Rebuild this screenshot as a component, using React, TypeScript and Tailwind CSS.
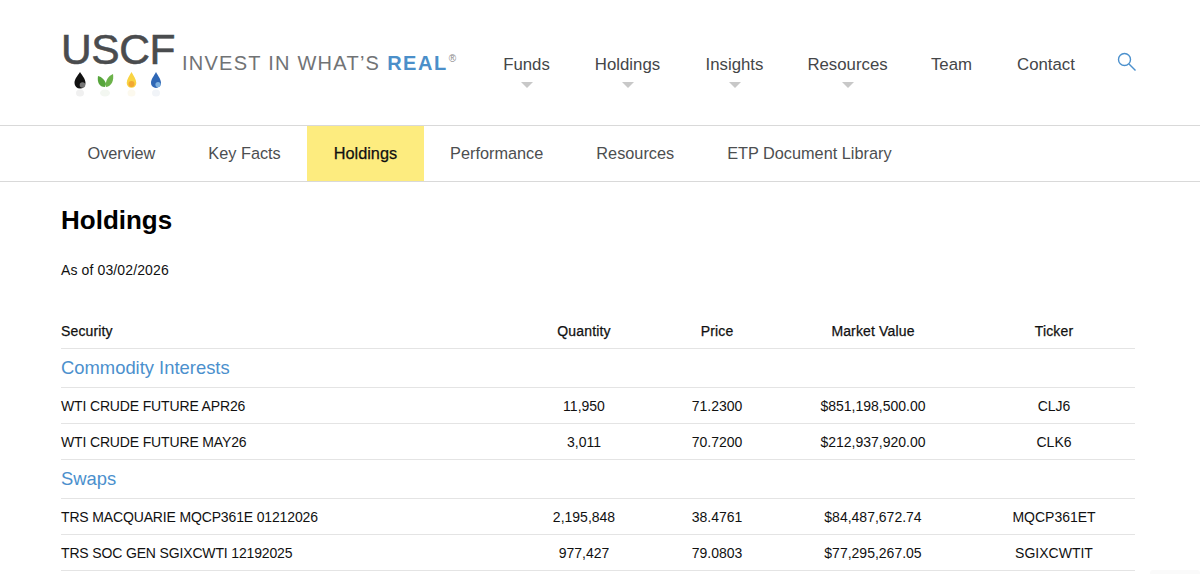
const navItems = [
  { label: "Funds", arrow: true, cls: "w-[45px]" },
  { label: "Holdings", arrow: true, cls: "w-[65px]" },
  { label: "Insights", arrow: true, cls: "w-[57px]" },
  { label: "Resources", arrow: true, cls: "w-[77px]" },
  { label: "Team", arrow: false, cls: "w-[39px]" },
  { label: "Contact", arrow: false, cls: "w-[58px]" },
];

const tabs = ["Overview", "Key Facts", "Holdings", "Performance", "Resources", "ETP Document Library"];

const Logo = () => (
  <div className="flex items-start">
    <div className="w-[115px] shrink-0">
      <div className="h-[39px] text-[42.5px] leading-[39px] tracking-[-0.4px] text-[#4a4c4e] whitespace-nowrap [-webkit-text-stroke:0.6px_#4a4c4e]">USCF</div>
      <svg width="115" height="34" viewBox="0 0 115 34" className="block">
        <path d="M19 3c2.500 4 5.500 7 5.500 11a5.500 5.500 0 0 1-11 0c0-4 3-7 5.500-11z" fill="#111" />
        <circle cx="21.500" cy="16" r="2.800" fill="#777" />
        <path d="M44 18c-6 0-8-5-7-11 4 1 7 4 8 8z" fill="#57a53c" />
        <path d="M45 18c-1-6 2-11 7-13 1 6-1 12-7 13z" fill="#6cb24a" />
        <path d="M70.500 3c2 4 4.800 7 4.800 11a4.800 4.800 0 0 1-9.600 0c0-4 2.800-7 4.800-11z" fill="#f9d443" />
        <circle cx="70.500" cy="15" r="3" fill="#f2a833" />
        <path d="M95 3c2 4 5 7 5 11a5 5 0 0 1-10 0c0-4 3-7 5-11z" fill="#2f67b5" />
        <circle cx="97" cy="15.500" r="2.600" fill="#7fb1df" />
        <ellipse cx="19" cy="24" rx="4" ry="3.500" fill="#f0f0f0" />
        <ellipse cx="44" cy="24" rx="5" ry="3.500" fill="#f3f7f1" />
        <ellipse cx="70.500" cy="24" rx="4" ry="3.500" fill="#fcf9ee" />
        <ellipse cx="95" cy="24" rx="4" ry="3.500" fill="#f1f4f8" />
      </svg>
    </div>
    <div className="ml-[6px] mt-[21px] flex items-start whitespace-nowrap text-[20px] leading-[24px] tracking-[1.25px] text-[#717375]">
      <span>INVEST IN WHAT’S</span>
      <span className="ml-[7px] font-bold tracking-[1.5px] text-[#4b8fc9]">REAL</span>
      <span className="ml-[1px] mt-[-4px] text-[10px] tracking-normal text-[#888]">®</span>
    </div>
  </div>
);

const Row = ({ cells }: { cells: string[] }) => (
  <div className="grid grid-cols-[446px_154px_112px_200px_162px] h-[36px] pt-[1px] items-center border-b border-[#e4e4e4] text-[14px] text-[#111]">
    <div className="tracking-[-0.15px]">{cells[0]}</div>
    <div className="text-center">{cells[1]}</div>
    <div className="text-center">{cells[2]}</div>
    <div className="text-center">{cells[3]}</div>
    <div className="text-center">{cells[4]}</div>
  </div>
);

const Group = ({ title }: { title: string }) => (
  <div className="h-[39px] flex items-center border-b border-[#e4e4e4] text-[18.400px] text-[#4b90cd]">{title}</div>
);

export default function App() {
  return (
    <div className="relative h-[574px] w-[1200px] overflow-hidden bg-white font-['Liberation_Sans',Arial,sans-serif]">
      <header className="h-[126px] border-b border-[#d9d9d9] pl-[61px] pr-[64px] flex items-start">
        <div className="pt-[30px]">
          <Logo />
        </div>
        <nav className="ml-[48px] flex pt-[55px] gap-[46px] text-[16.800px] leading-[20px] text-[#444648]">
          {navItems.map((n) => (
            <div key={n.label} className={`${n.cls} flex flex-col items-center whitespace-nowrap`}>
              <span>{n.label}</span>
              {n.arrow && <span className="mt-[7px] border-x-[6px] border-t-[6px] border-x-transparent border-t-[#c8c8c8]" />}
            </div>
          ))}
        </nav>
        <svg width="20" height="20" viewBox="0 0 20 20" fill="none" stroke="#4b90cd" strokeWidth="1.400" className="ml-auto mt-[52px] -mr-[1px]">
          <circle cx="7.500" cy="7.500" r="6" />
          <path d="M12 12L18.500 18.500" />
        </svg>
      </header>

      <div className="h-[56px] border-b border-[#d9d9d9] pl-[61px] flex text-[16.300px] text-[#4c4e50]">
        {tabs.map((t) => (
          <div
            key={t}
            className={
              t === "Holdings"
                ? "h-[55px] px-[26.500px] flex items-center bg-[#fdec7f] text-[#111] [-webkit-text-stroke:0.25px_#111]"
                : "h-[55px] px-[26.500px] flex items-center whitespace-nowrap"
            }
          >
            {t}
          </div>
        ))}
      </div>

      <main className="px-[61px]">
        <h1 className="mt-[22px] text-[26px] leading-[32px] font-bold text-black">Holdings</h1>
        <p className="mt-[24px] text-[14px] leading-[20px] tracking-[0.12px] text-[#111]">As of 03/02/2026</p>

        <div className="mt-[34px] w-[1074px]">
          <div className="grid grid-cols-[446px_154px_112px_200px_162px] h-[35px] items-center border-b border-[#e4e4e4] text-[14px] tracking-[0.15px] text-[#111] [-webkit-text-stroke:0.25px_#111]">
            <div>Security</div>
            <div className="text-center">Quantity</div>
            <div className="text-center">Price</div>
            <div className="text-center">Market Value</div>
            <div className="text-center">Ticker</div>
          </div>
          <Group title="Commodity Interests" />
          <Row cells={["WTI CRUDE FUTURE APR26", "11,950", "71.2300", "$851,198,500.00", "CLJ6"]} />
          <Row cells={["WTI CRUDE FUTURE MAY26", "3,011", "70.7200", "$212,937,920.00", "CLK6"]} />
          <Group title="Swaps" />
          <Row cells={["TRS MACQUARIE MQCP361E 01212026", "2,195,848", "38.4761", "$84,487,672.74", "MQCP361ET"]} />
          <Row cells={["TRS SOC GEN SGIXCWTI 12192025", "977,427", "79.0803", "$77,295,267.05", "SGIXCWTIT"]} />
        </div>
      </main>

      <div className="absolute bottom-0 right-0 h-[4px] w-[50px] rounded-t-[3px] bg-[#fafafa]" />
    </div>
  );
}
